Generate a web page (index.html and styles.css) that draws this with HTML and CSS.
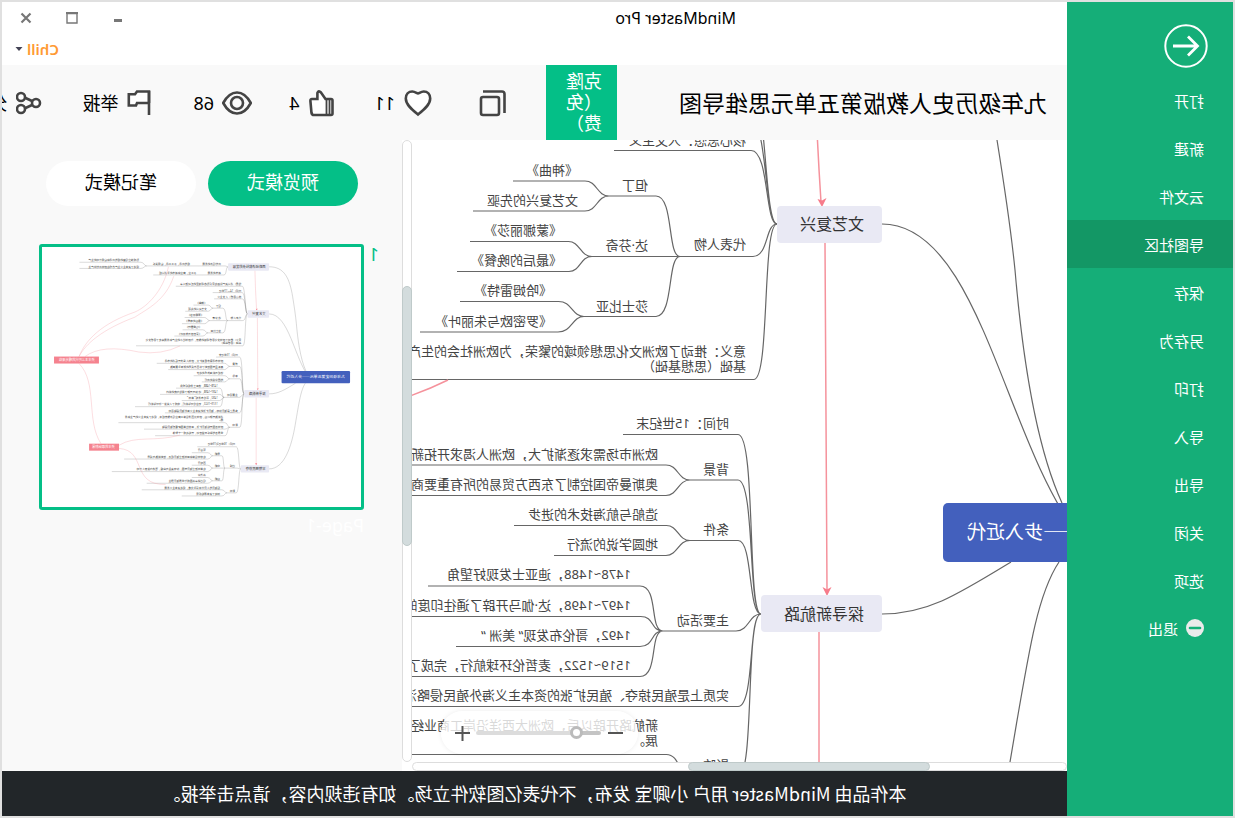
FILE: index.html
```html
<!DOCTYPE html>
<html lang="zh-CN">
<head>
<meta charset="utf-8">
<title>MindMaster Pro</title>
<link rel="stylesheet" href="styles.css">
</head>
<body>
<div class="window">
  <aside class="sidebar">
    <button class="back" aria-label="返回">
      <svg width="44" height="44" viewBox="0 0 44 44" fill="none" stroke="#fff"><circle cx="22" cy="22" r="20.7" stroke-width="2"/><path d="M35 22H11M20 12.500L10.500 22L20 31.500" stroke-width="2.800"/></svg>
    </button>
    <nav class="menu">
      <a href="#">打开</a>
      <a href="#">新建</a>
      <a href="#">云文件</a>
      <a href="#" class="active">导图社区</a>
      <a href="#">保存</a>
      <a href="#">另存为</a>
      <a href="#">打印</a>
      <a href="#">导入</a>
      <a href="#">导出</a>
      <a href="#">关闭</a>
      <a href="#">选项</a>
      <a href="#" class="exit"><svg width="18" height="18" viewBox="0 0 18 18"><circle cx="9" cy="9" r="9" fill="#ebebeb"/><path d="M4 9H14" stroke="#15ae78" stroke-width="2.600" stroke-linecap="round"/></svg>退出</a>
    </nav>
  </aside>
  <main class="main">
    <header class="titlebar">
      <div class="caption">
        <span class="app-name">MindMaster Pro</span>
        <div class="controls">
          <button aria-label="最小化"><svg width="14" height="14" viewBox="0 0 14 14"><path d="M3 9.500H11" stroke="#777" stroke-width="3"/></svg></button>
          <button aria-label="最大化"><svg width="14" height="14" viewBox="0 0 14 14"><path d="M2 2.500H12V12H2Z" fill="none" stroke="#777" stroke-width="1.400"/><path d="M1 2H13" stroke="#777" stroke-width="2"/></svg></button>
          <button aria-label="关闭"><svg width="14" height="14" viewBox="0 0 14 14"><path d="M2.500 2.500L11.500 11.500M11.500 2.500L2.500 11.500" stroke="#777" stroke-width="2.200"/></svg></button>
        </div>
      </div>
      <button class="user">Chill<svg width="8" height="6" viewBox="0 0 8 6"><path d="M0.500 1H7.500L4 5Z" fill="#445"/></svg></button>
    </header>
    <section class="toolbar">
      <h1>九年级历史人教版第五单元思维导图</h1>
      <button class="clone">克隆（免费）</button>
      <div class="stats">
        <button class="stat copy" aria-label="复制"><svg class="icon" viewBox="0 0 30 30"><rect x="9" y="9" width="18" height="18" rx="2"/><path d="M25 3.500H6Q3.500 3.500 3.500 6V25"/></svg></button>
        <button class="stat"><svg class="icon" viewBox="0 0 30 30"><path class="paper" d="M15 26.500C10 22.500 2.800 17 2.800 10.500C2.800 6.500 5.500 3.500 9.300 3.500C12 3.500 14 5.500 15 5.500C16 5.500 18 3.500 20.700 3.500C24.500 3.500 27.200 6.500 27.200 10.500C27.200 17 20 22.500 15 26.500Z"/></svg>11</button>
        <button class="stat"><svg class="icon" viewBox="0 0 30 30"><path class="paper" d="M4.500 12.500Q4.500 11 6 11H11.500L16 4.500Q18.500 2 19.600 5V11H25Q26.800 11 26.600 13L25.500 25Q25.200 27 23 27H6Q4.500 27 4.500 25.500Z"/><path d="M10.500 11.500V27M7.500 12V26" stroke-width="1.800"/></svg>4</button>
        <button class="stat"><svg class="icon" viewBox="0 0 30 30"><path d="M1.200 15Q7 4.500 15 4.500T28.800 15Q23 25.500 15 25.500T1.200 15Z"/><circle cx="15" cy="15" r="6"/></svg>68</button>
        <button class="stat"><svg class="icon" viewBox="-3 0 30 30"><path class="paper" d="M5 15V3.500H17L19 6.200H25.200V17.500H18L17 15H5"/><path d="M5 27V3"/></svg>举报</button>
        <button class="stat"><svg class="icon" viewBox="-3 0 30 30"><path d="M11 13L18.500 9.500M11 17L18.500 20.500"/><circle class="paper" cx="22" cy="9" r="4"/><circle class="paper" cx="22" cy="21" r="4"/><circle class="paper" cx="7" cy="15" r="4"/></svg>分享</button>
      </div>
    </section>
    <section class="workspace">
      <div class="viewer">
        <div class="canvas">
          <svg class="map-view" role="img" aria-label="思维导图">
            <g transform="translate(0,-140)">
              <g id="map">
                <g class="wire">
                  <path d="M185 224C88 224 62 440 -10 533"/>
                  <path d="M185 -6C110 -6 85 50 70 140C62 190 56 230 52 270C46 340 34 440 5 503"/>
                  <path d="M185 614C140 614 110 595 56 562"/>
                  <path d="M8 562C30 595 38 650 57 762C75 870 110 980 185 980"/>

                  <path d="M530 -10H400C390 -10 395 -6 385 -6M510 34H405C392 34 396 -6 385 -6"/>
                  <path d="M530 -10H782M510 34H750M1110 -28H810C795 -28 795 -10 782 -10M1110 2H810C795 2 795 -10 782 -10"/>

                  <path d="M640 89H316C300 89 303 224 290 224M460 120H316C300 120 302 224 290 224"/>
                  <path d="M453 150.500H316C298 150 302 224 290 224"/>
                  <path d="M387 256.500H314C298 256 302 224 290 224"/>
                  <path d="M834 379.500H313C297 379 305 224 290 224"/>
                  <path d="M458 196H411C393 196 400 256.500 387 256.500M475 256.500H387M483 316.500H411C393 316 400 256.500 387 256.500"/>
                  <path d="M554 181H482C470 181 470 196 458 196M594 211H482C470 211 470 196 458 196"/>
                  <path d="M597 241.500H499C487 241 487 256.500 475 256.500M610 271.500H498C486 271 487 256.500 475 256.500"/>
                  <path d="M607 301.500H509C495 301 495 316.500 483 316.500M647 332H509C495 332 495 316.500 483 316.500"/>

                  <path d="M444 434.500H329C311 434 320 614 306 614M377 480H329C312 480 319 614 306 614M377 540.500H329C314 540 319 614 306 614"/>
                  <path d="M404 631H331C318 631 318 614 306 614M693 706.500H329C312 706 319 614 306 614M377 777H329C312 777 322 614 306 614"/>
                  <path d="M733 465H401C389 465 389 480 377 480M677 495.500H401C389 495 389 480 377 480"/>
                  <path d="M553 525.500H401C389 525 389 540.500 377 540.500M513 555.500H401C389 555 389 540.500 377 540.500"/>
                  <path d="M639 586H427C408 586 418 631 404 631M717 616.500H427C412 616 417 631 404 631M611 646.500H427C412 646 417 631 404 631M839 676.500H427C408 676 418 631 404 631"/>
                  <path d="M920 754.500H401C387 754 388 777 377 777M795 786H401C389 786 389 777 377 777M741 818H401C385 818 390 777 377 777"/>

                  <path d="M535 872H345C330 872 335 980 323 980M400 976H345C332 976 332 980 323 980M390 1097H345C330 1097 335 980 323 980"/>
                  <path d="M460 916H415C405 916 410 976 400 976M460 976H400M460 1038H415C405 1038 410 976 400 976"/>
                  <path d="M562 901H485C470 901 470 916 460 916M892 932H485C470 932 470 916 460 916M562 962H485C470 962 470 976 460 976M952 993H485C470 993 470 976 460 976M562 1022H485C470 1022 470 1038 460 1038M782 1050H485C470 1050 470 1038 460 1038"/>
                  <path d="M806 1082H415C402 1082 402 1097 390 1097M611 1112H415C402 1112 402 1097 390 1097"/>
                </g>
                <g class="relation">
                  <path d="M254 11Q252 110 246 202M242 243L240 590M248 632V957"/>
                  <path d="M676 -6C700 110 780 190 840 215C1000 270 1080 350 1112 432M650 40C690 160 780 200 840 240C1000 300 1080 370 1112 432"/>
                  <path d="M619 380Q710 425 820 410Q1000 370 1083 432M1112 466C1020 560 1080 740 1005 857M917 865C840 815 740 850 620 815M917 880C780 890 860 1060 690 1056"/>
                </g>
                <path class="tip" d="M245 207L240.500 198L245 200.500L249.500 199ZM240 596L235.500 587L240 589.500L244.500 587ZM248 962L243 952H253Z"/>
                <rect class="topic" x="185" y="-23" width="200" height="36" rx="4"/>
                <rect class="topic" x="185" y="206" width="105" height="37" rx="4"/>
                <rect class="topic" x="185" y="595" width="121" height="37" rx="4"/>
                <rect class="topic" x="185" y="962" width="138" height="36" rx="4"/>
                <rect class="root" x="-210" y="503" width="334" height="59" rx="5"/>
                <rect class="note" x="1015" y="432" width="219" height="34"/>
                <rect class="note" x="917" y="857" width="146" height="34"/>
                <g class="topic-text">
                  <text x="203" y="1">西欧经济和社会的发展</text>
                  <text x="203" y="230">文艺复兴</text>
                  <text x="203" y="620">探寻新航路</text>
                  <text x="203" y="986">早期殖民掠夺</text>
                </g>
                <g class="note-text">
                  <text x="1035" y="455">资本主义时代的曙光来临</text>
                  <text x="938" y="880">资本的原始积累</text>
                </g>
                <text class="root-text" x="100" y="539">九年级历史第五单元——步入近代</text>
                <g class="leaf">
                  <text x="420" y="-14">农村经济的发展</text><text x="571" y="-14">租地农场，手工工场，雇佣关系</text>
                  <text x="820" y="-32">形成独立经营的租地农场和雇佣劳动的生产</text><text x="820" y="-2">促进了资本主义生产方式在欧洲农村中产生</text>
                  <text x="420" y="30">城市的发展</text><text x="540" y="30">手工业，商业和城市的重新兴起</text>
                  <text x="321" y="84">性质：新兴资产阶级在意识形态领域里的反封建斗争</text>
                  <text x="321" y="115">时间：14—17世纪</text>
                  <text x="321" y="145">核心思想：人文主义</text>
                  <text x="321" y="249">代表人物</text>
                  <text x="419" y="190">但丁</text><text x="419" y="250">达·芬奇</text><text x="419" y="311">莎士比亚</text>
                  <text x="489" y="175">《神曲》</text><text x="489" y="205">文艺复兴的先驱</text>
                  <text x="505" y="235">《蒙娜丽莎》</text><text x="505" y="265">《最后的晚餐》</text>
                  <text x="515" y="295">《哈姆雷特》</text><text x="515" y="326">《罗密欧与朱丽叶》</text>
                  <text x="321" y="356">意义：推动了欧洲文化思想领域的繁荣，为欧洲社会的生产和发展奠定了思想文化</text>
                  <text x="321" y="371">基础（思想基础）</text>
                  <text x="338" y="428">时间：15世纪末</text>
                  <text x="338" y="474">背景</text><text x="338" y="534">条件</text><text x="338" y="625">主要活动</text>
                  <text x="409" y="459">欧洲市场需求逐渐扩大，欧洲人渴求开拓新的市场</text>
                  <text x="409" y="489">奥斯曼帝国控制了东西方贸易的所有重要商路</text>
                  <text x="409" y="519">造船与航海技术的进步</text><text x="409" y="549">地圆学说的流行</text>
                  <text x="436" y="579">1478~1488，迪亚士发现好望角</text>
                  <text x="436" y="610">1497~1498，达·伽马开辟了通往印度的航线</text>
                  <text x="436" y="640">1492，哥伦布发现“ 美洲 “</text>
                  <text x="436" y="670">1519~1522，麦哲伦环球航行，完成了人类第一次环球航行</text>
                  <text x="338" y="700">实质上是殖民掠夺、殖民扩张的资本主义海外殖民侵略活动</text>
                  <text x="409" y="730">新航路开辟以后，欧洲大西洋沿岸工商业经济繁荣起来，促进了资本主义的产生和发</text>
                  <text x="409" y="745">展。</text>
                  <text x="338" y="770">影响</text>
                  <text x="409" y="780">欧洲各国开始殖民扩张，亚非拉美国家遭受殖民侵略</text>
                  <text x="409" y="811">世界各地联系日益密切，开始连成一个整体</text>
                  <text x="351" y="865">时间：16世纪到19世纪</text>
                  <text x="351" y="970">过程</text><text x="351" y="1091">影响</text>
                  <text x="424" y="910">早期</text><text x="424" y="970">中期</text><text x="424" y="1032">后期</text>
                  <text x="494" y="895">葡萄牙</text><text x="494" y="926">在非洲沿岸和亚洲建立殖民据点，控制航路与贸易</text>
                  <text x="494" y="956">西班牙</text><text x="494" y="987">在美洲建立殖民帝国，掠夺黄金与白银，强迫印第安人劳动</text>
                  <text x="494" y="1016">英法荷</text><text x="494" y="1044">经过战争英国成为世界殖民霸主</text>
                  <text x="424" y="1076">给殖民地人民带来深重灾难，促进资本主义发展</text><text x="424" y="1106">加速了资本原始积累</text>
                </g>
              </g>
            </g>
          </svg>
          <div class="zoombar">
            <button aria-label="缩小"><svg width="16" height="16" viewBox="0 0 16 16"><path d="M0 8H15" stroke="#555" stroke-width="2"/></svg></button>
            <input type="range" min="0" max="100" value="16" aria-label="缩放">
            <button aria-label="放大"><svg width="16" height="16" viewBox="0 0 16 16"><path d="M0 8H15M7.500 1V16" stroke="#555" stroke-width="2"/></svg></button>
          </div>
        </div>
        <div class="scroll vertical"><div class="thumb"></div></div>
        <div class="scroll horizontal"><div class="thumb"></div></div>
      </div>
      <aside class="panel">
        <div class="modes">
          <button class="mode selected">预览模式</button>
          <button class="mode">笔记模式</button>
        </div>
        <div class="page">
          <span class="page-no">1</span>
          <figure>
            <div class="preview"><svg viewBox="0 0 319 260"><use href="#map" transform="translate(54,21) scale(.205)"/></svg></div>
            <figcaption>Page-1</figcaption>
          </figure>
        </div>
      </aside>
    </section>
    <footer class="notice">本作品由 MindMaster 用户 小卿宝 发布，不代表亿图软件立场。如有违规内容，请点击举报。</footer>
  </main>
</div>
</body>
</html>
```
FILE: styles.css
```css
* { box-sizing: border-box; }
body {
  margin: 0;
  font-family: "Noto Sans", "Noto Sans CJK SC", sans-serif;
  color: #000;
}
button {
  font: inherit;
  color: inherit;
  border: 0;
  padding: 0;
  background: none;
  cursor: pointer;
}
svg { display: block; flex: none; }

/* The whole window is shown as its mirror image */
.window {
  display: grid;
  grid-template-columns: 166px minmax(0, 1fr);
  height: 100vh;
  border: 2px solid #e0e0e0;
  background: #fff;
  overflow: hidden;
  transform: scaleX(-1);
}

.sidebar { background: #15ae78; padding-top: 22px; }
.back { display: block; margin-left: 25px; }
.menu { margin-top: 8px; font-size: 15px; }
.menu a {
  display: flex;
  align-items: center;
  gap: 8px;
  height: 48px;
  padding-left: 29px;
  color: #fff;
  text-decoration: none;
}
.menu .active { background: #139765; }

.main { display: flex; flex-direction: column; min-width: 0; }
.titlebar { height: 63px; flex: none; display: flex; flex-direction: column; align-items: flex-end; }
.caption {
  display: flex;
  align-items: center;
  width: 100%;
  height: 32px;
  padding: 0 9px 0 331px;
  font-size: 16px;
}
.controls { display: flex; gap: 16px; margin-left: auto; }
.controls button { width: 30px; height: 30px; display: grid; place-items: center; }
.user {
  display: flex;
  align-items: center;
  gap: 4px;
  height: 32px;
  margin-right: 13px;
  font-size: 15px;
  font-weight: 600;
  color: #ff9a33;
}

.toolbar { display: flex; align-items: center; height: 75px; flex: none; background: #f9f9f9; overflow: hidden; }
.toolbar h1 { flex: 0 0 450px; margin: 0; padding-left: 20px; font-size: 23px; font-weight: 400; line-height: 30px; }
.clone {
  flex: 0 0 71px;
  align-self: stretch;
  padding: 0 15px;
  background: #04bf87;
  color: #fff;
  font-size: 18px;
  line-height: 21px;
  text-align: left;
}
.stats { display: flex; gap: 37px; margin-left: 38px; }
.stat { display: flex; align-items: center; gap: 8px; flex: none; font-size: 18px; line-height: 30px; }
.stat.copy { margin-right: 8px; }
.icon { width: 30px; height: 30px; fill: none; stroke: #444; stroke-width: 2.600px; }
.icon .paper { fill: #fff; }

.workspace { flex: 1; display: flex; min-height: 0; }
.viewer {
  flex: 1;
  min-width: 0;
  display: grid;
  grid-template-columns: minmax(0, 1fr) 10px;
  grid-template-rows: minmax(0, 1fr) 9px;
  background: #fff;
}
.canvas { position: relative; overflow: hidden; }
.map-view { width: 100%; height: 100%; }
.wire { fill: none; stroke: #666; stroke-width: 1.200px; }
.relation { fill: none; stroke: #f5929c; stroke-width: 1.500px; }
.tip { fill: #f77c8b; }
.topic { fill: #e9e9f4; }
.root { fill: #4360bd; }
.note { fill: #f5828e; }
.topic-text { font-size: 16px; fill: #333; }
.note-text { font-size: 16px; fill: #fff; }
.root-text { font-family: "Noto Sans CJK SC", sans-serif; font-size: 19px; fill: #fff; text-anchor: end; }
.leaf { font-size: 13px; fill: #444; }

.zoombar {
  position: absolute;
  left: 429px;
  bottom: 8px;
  display: flex;
  align-items: center;
  gap: 6px;
  height: 43px;
  padding: 0 13px 0 15px;
  border-radius: 22px;
  background: rgba(255, 255, 255, .8);
  box-shadow: 0 0 5px rgba(0, 0, 0, .08);
}
.zoombar input { width: 125px; height: 14px; margin: 0; appearance: none; background: none; }
.zoombar input::-webkit-slider-runnable-track {
  height: 4px;
  border-radius: 2px;
  background: linear-gradient(to right, #c4c4c4 20%, #dcdcdc 20%);
}
.zoombar input::-webkit-slider-thumb {
  appearance: none;
  width: 13px;
  height: 13px;
  margin-top: -5px;
  border: 3px solid #bbb;
  border-radius: 50%;
  background: #fff;
}

.scroll { border: 1px solid #ddd; border-radius: 6px; background: #fff; display: flex; }
.scroll .thumb { background: #d3dcdd; border: 1px solid #bfcaca; border-radius: 6px; }
.scroll.vertical { flex-direction: column; padding-top: 145px; }
.scroll.vertical .thumb { height: 260px; margin: 0 -1px; }
.scroll.horizontal { padding-left: 136px; }
.scroll.horizontal .thumb { width: 242px; margin: -1px 0; }

.panel { flex: 0 0 400px; padding: 21px 37px 0 23px; background: #f9f9f9; }
.modes { display: flex; gap: 12px; padding-left: 21px; }
.mode { width: 150px; height: 45px; border-radius: 23px; background: #fff; font-size: 18px; line-height: 43px; padding-bottom: 2px; }
.mode.selected { background: #04bf87; color: #fff; }
.page { display: flex; margin-top: 38px; font-size: 18px; line-height: 20px; }
.page-no { width: 15px; color: #04bf87; }
.page figure { flex: 1; margin: 0; }
.preview { border: 3px solid #04bf87; border-radius: 3px; background: #fff; }
.preview svg { width: 100%; height: auto; }
.page figcaption { margin-top: 5px; color: #fff; }

.notice {
  flex: none;
  height: 45px;
  padding: 0 20px;
  background: #222629;
  color: #fff;
  font-family: "Noto Sans CJK SC", sans-serif;
  font-size: 18px;
  line-height: 45px;
  text-align: center;
  white-space: nowrap;
  overflow: hidden;
}
```
